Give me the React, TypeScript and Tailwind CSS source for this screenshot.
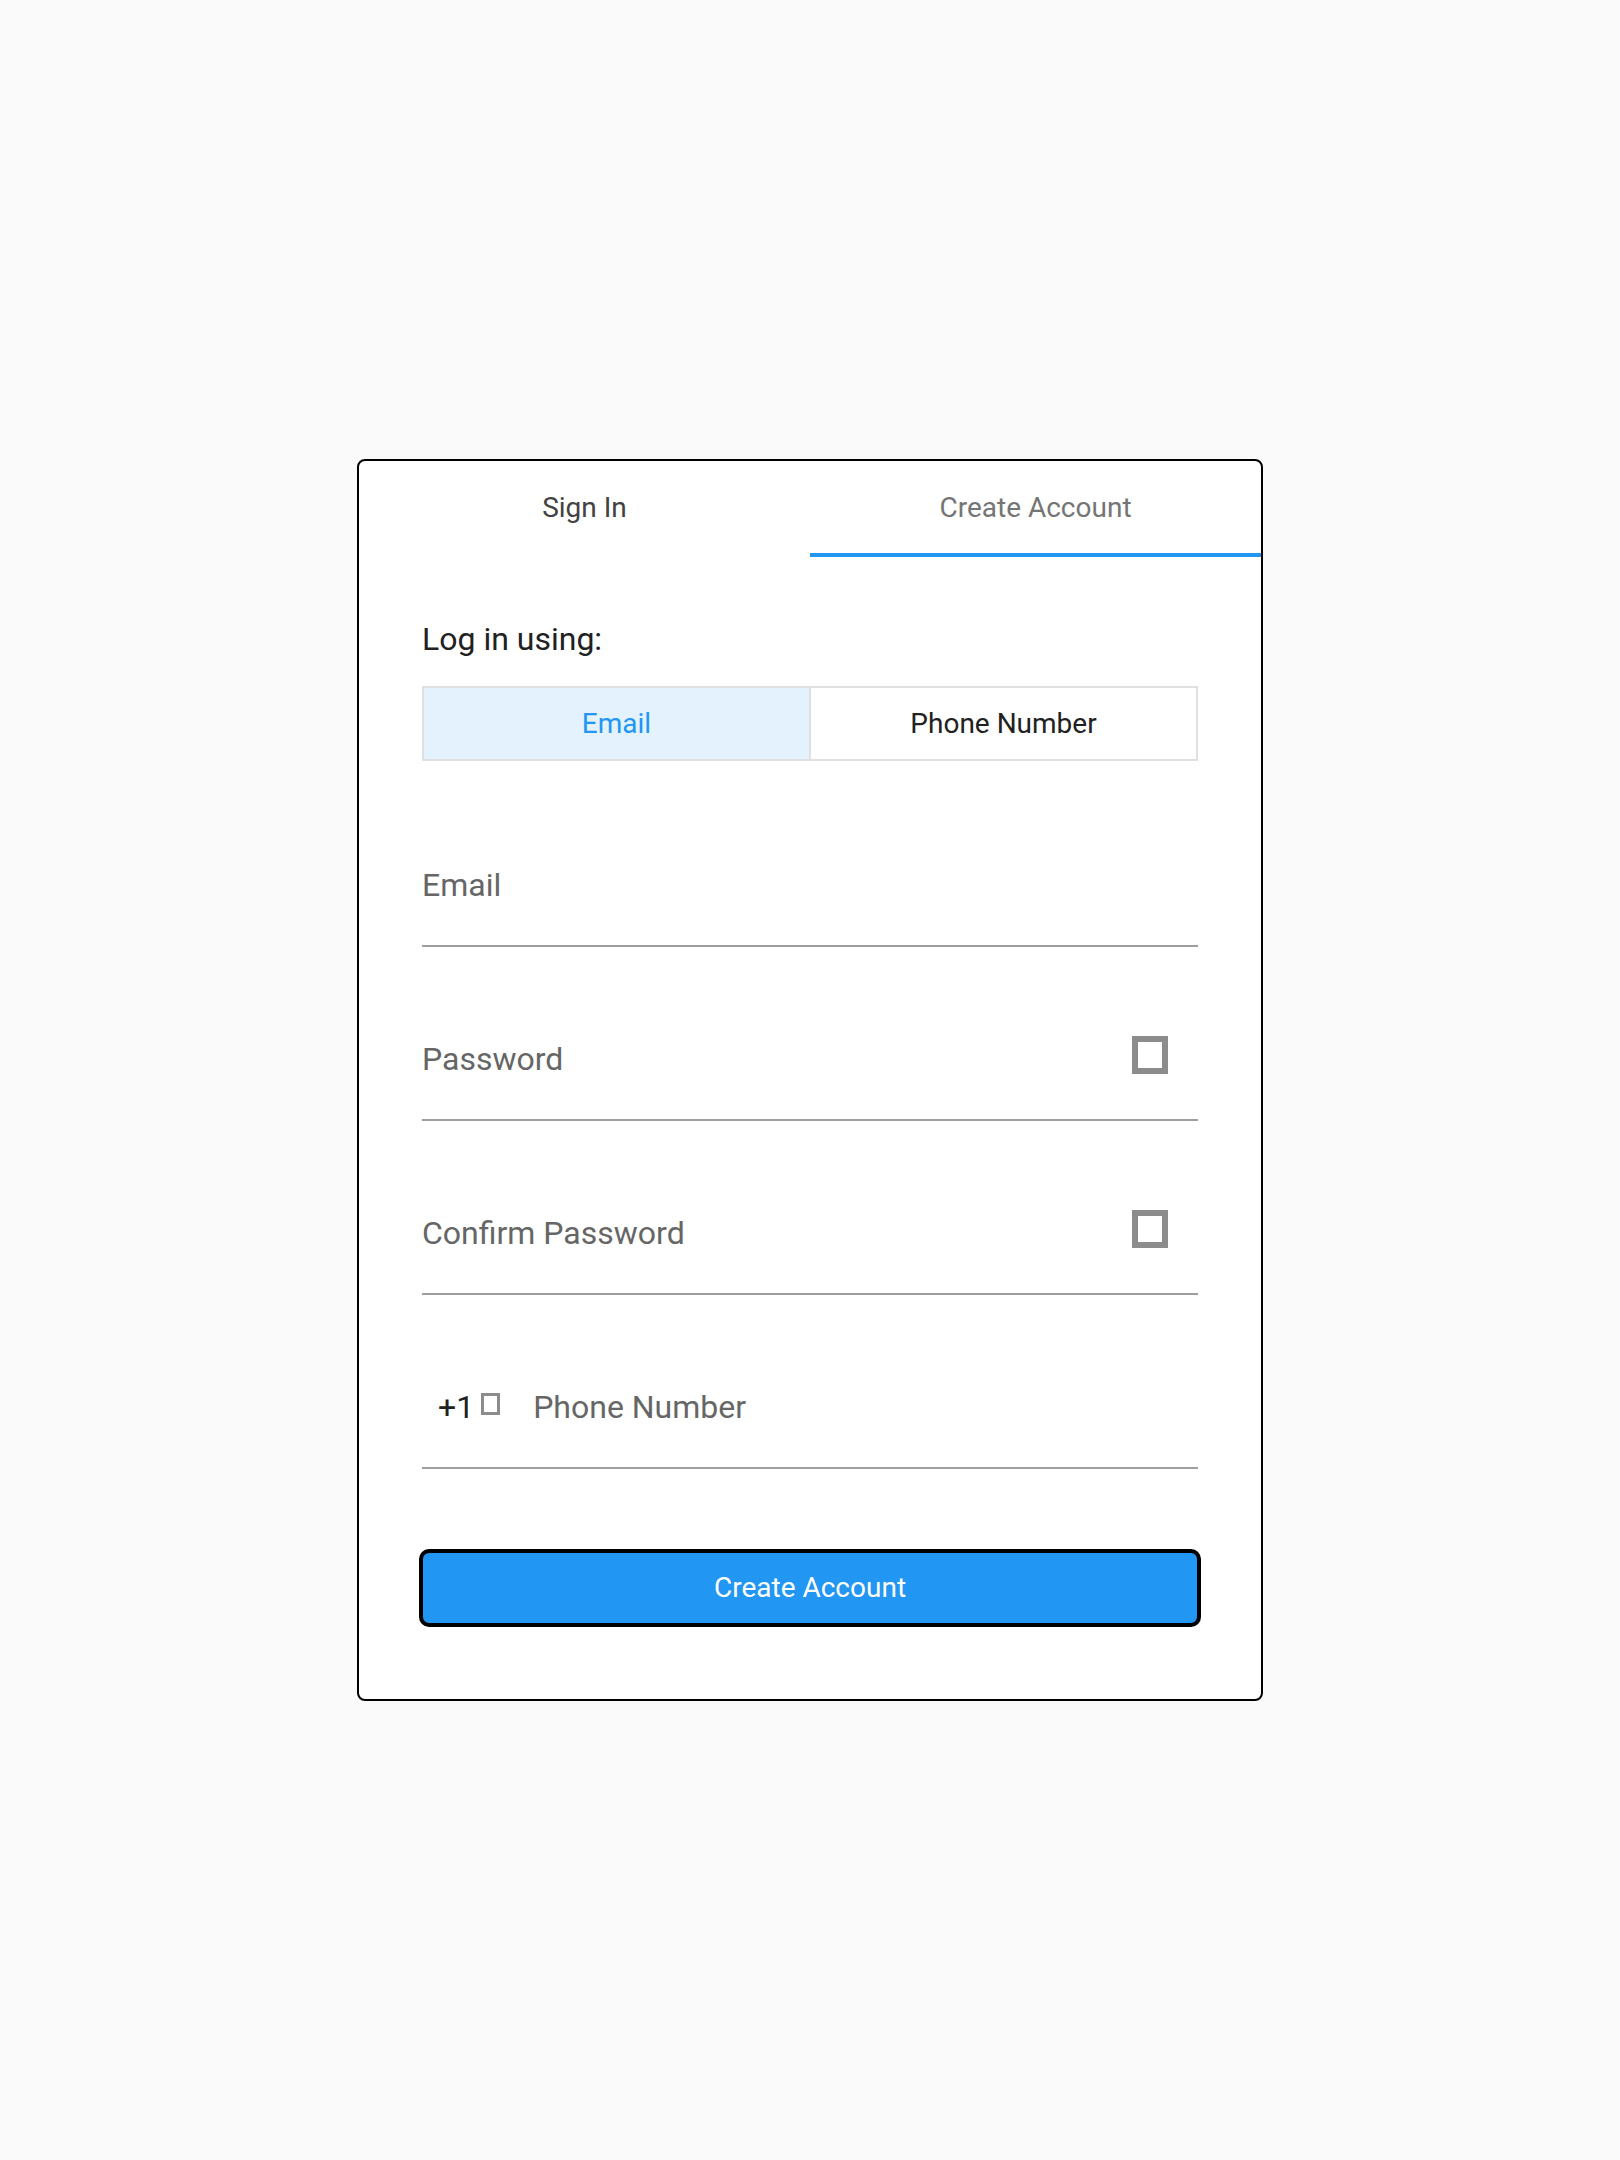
import React from "react";

// Missing-glyph box, the icon font in the reference never loaded
const Tofu = ({ className }: { className: string }) => (
  <span className={`inline-block bg-white ${className}`} />
);

const Field = ({
  label,
  first,
  icon,
  prefix,
}: {
  label: string;
  first?: boolean;
  icon?: boolean;
  prefix?: boolean;
}) => (
  <div
    className={`flex h-[174px] items-end border-b-2 border-[#9e9e9e] pb-[36px] ${
      first ? "mt-[12px]" : ""
    }`}
  >
    <div className="flex h-[48px] w-full items-center">
      {prefix && (
        <div className="ml-[16px] mr-[33px] flex items-center">
          <span className="text-[32px] leading-[48px] text-[#212121]">+1</span>
          <Tofu className="-mt-[6px] ml-[7px] h-[22px] w-[19px] border-[3px] border-[#8c8c8c]" />
        </div>
      )}
      <span className="flex-1 text-[32px] leading-[48px] text-[#666666]">
        {label}
      </span>
      {icon && (
        <Tofu className="-mt-[8px] mr-[30px] h-[38px] w-[36px] border-[6px] border-[#8c8c8c]" />
      )}
    </div>
  </div>
);

export default function App() {
  return (
    <div
      className="flex min-h-screen items-center justify-center bg-[#fafafa]"
      style={{ fontFamily: "Roboto, 'Liberation Sans', sans-serif" }}
    >
      <div className="w-[906px] rounded-[8px] border-2 border-black bg-white">
        <div className="flex">
          <button className="flex h-[96px] flex-1 items-center justify-center border-b-4 border-transparent pt-[2px] text-[28px] text-[#424242]">
            Sign In
          </button>
          <button className="flex h-[96px] flex-1 items-center justify-center border-b-4 border-[#2196f3] pt-[2px] text-[28px] text-[#757575]">
            Create Account
          </button>
        </div>

        <div className="px-[63px] pb-[72px] pt-[58px]">
          <p className="text-[32px] leading-[48px] text-[#212121]">
            Log in using:
          </p>
          <div className="mt-[23px] flex h-[75px] border-2 border-[#e0e0e0]">
            <button className="flex flex-1 items-center justify-center border-r-2 border-[#e0e0e0] bg-[#e3f2fd] text-[28px] text-[#2196f3]">
              Email
            </button>
            <button className="flex flex-1 items-center justify-center bg-white text-[28px] text-[#212121]">
              Phone Number
            </button>
          </div>

          <Field label="Email" first />
          <Field label="Password" icon />
          <Field label="Confirm Password" icon />
          <Field label="Phone Number" prefix />

          <button className="-mx-[3px] mt-[80px] flex h-[78px] w-[calc(100%+6px)] items-center justify-center rounded-[10px] border-4 border-black bg-[#2196f3] text-[28px] text-white">
            Create Account
          </button>
        </div>
      </div>
    </div>
  );
}
